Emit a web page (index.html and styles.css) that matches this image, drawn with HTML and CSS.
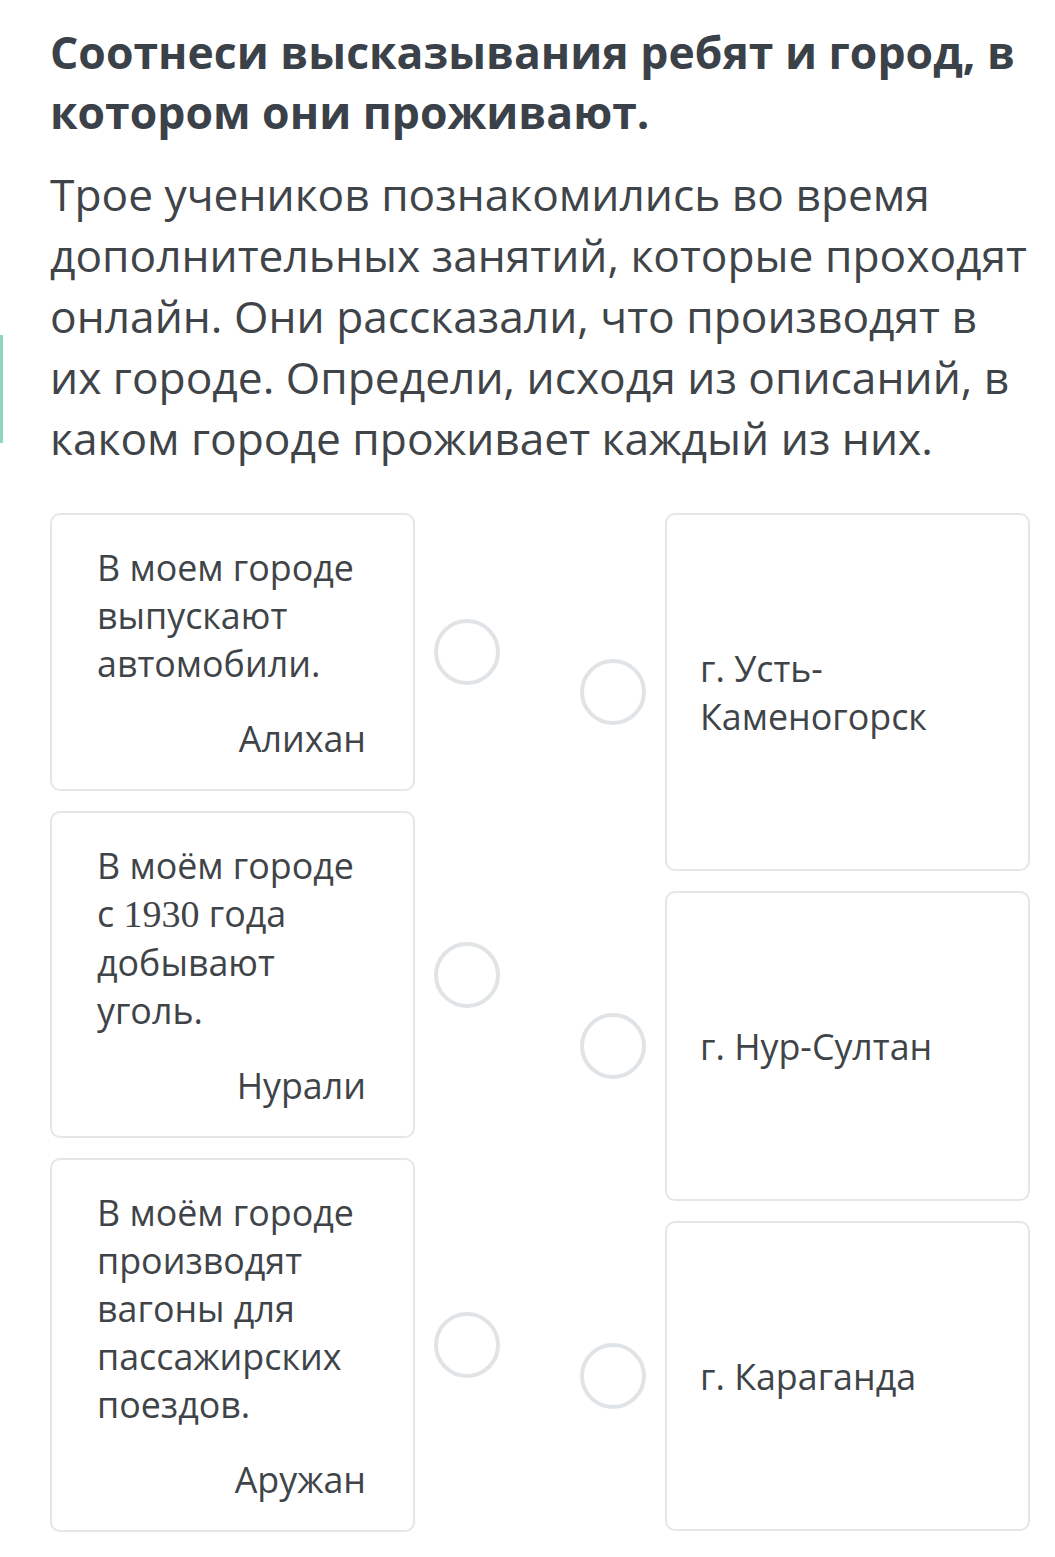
FILE: index.html
```html
<!DOCTYPE html>
<html lang="ru">
<head>
  <meta charset="UTF-8" />
  <meta name="viewport" content="width=device-width, initial-scale=1.0" />
  <title>Соотнеси высказывания</title>
  <link rel="stylesheet" href="styles.css">
</head>
<body>
  <div class="side-mark"></div>
  <div class="task">
    <h1 class="task-title">Соотнеси высказывания ребят и город, в котором они проживают.</h1>
    <p class="task-text">Трое учеников познакомились во время дополнительных занятий, которые проходят онлайн. Они рассказали, что производят в их городе. Определи, исходя из описаний, в каком городе проживает каждый из них.</p>

    <div class="match">
      <div class="match-col">
        <div class="match-row">
          <div class="card quote">
            <div class="quote-text">В моем городе выпускают автомобили.</div>
            <div class="quote-name">Алихан</div>
          </div>
          <span class="dot"></span>
        </div>
        <div class="match-row">
          <div class="card quote">
            <div class="quote-text">В моём городе с <span class="num">1930</span> года добывают уголь.</div>
            <div class="quote-name">Нурали</div>
          </div>
          <span class="dot"></span>
        </div>
        <div class="match-row">
          <div class="card quote">
            <div class="quote-text">В моём городе производят вагоны для пассажирских поездов.</div>
            <div class="quote-name">Аружан</div>
          </div>
          <span class="dot"></span>
        </div>
      </div>

      <div class="match-col">
        <div class="match-row city-tall">
          <span class="dot"></span>
          <div class="card city">г. Усть-<br>Каменогорск</div>
        </div>
        <div class="match-row city-short">
          <span class="dot"></span>
          <div class="card city">г. Нур-Султан</div>
        </div>
        <div class="match-row city-short">
          <span class="dot"></span>
          <div class="card city">г. Караганда</div>
        </div>
      </div>
    </div>
  </div>
</body>
</html>
```

FILE: styles.css
```css
body {
  margin: 0;
  background: #ffffff;
  font-family: "Open Sans", "Noto Sans", sans-serif;
  color: #3d4247;
}
.side-mark {
  position: absolute;
  left: 0;
  top: 335px;
  width: 3px;
  height: 108px;
  background: #8ed7b8;
}
.task {
  padding: 22px 25px 20px 50px;
}
.task-title {
  margin: 0;
  font-size: 44.5px;
  line-height: 60px;
  font-weight: 700;
  color: #3b4148;
}
.task-text {
  margin: 22px 0 0;
  font-size: 44.3px;
  line-height: 61px;
  color: #3f4448;
}
.match {
  display: flex;
  justify-content: space-between;
  margin-top: 44px;
}
.match-col {
  display: flex;
  flex-direction: column;
  gap: 20px;
}
.match-row {
  display: flex;
  align-items: center;
  gap: 19px;
}
.card {
  box-sizing: border-box;
  width: 365px;
  border: 2px solid #e4e6e8;
  border-radius: 10px;
  background: #ffffff;
  font-size: 35.8px;
  line-height: 48px;
  color: #3f4448;
}
.quote {
  padding: 28px 47px 27px 45px;
}
.quote-name {
  margin-top: 27px;
  text-align: right;
}
.num {
  font-family: "Liberation Serif", "DejaVu Serif", serif;
  font-size: 38px;
}
.city {
  display: flex;
  align-items: center;
  padding: 0 33px;
}
.city-tall .city {
  height: 358px;
}
.city-short .city {
  height: 310px;
}
.dot {
  box-sizing: border-box;
  flex: none;
  width: 66px;
  height: 66px;
  border: 4px solid #e0e4e7;
  border-radius: 50%;
}
```
